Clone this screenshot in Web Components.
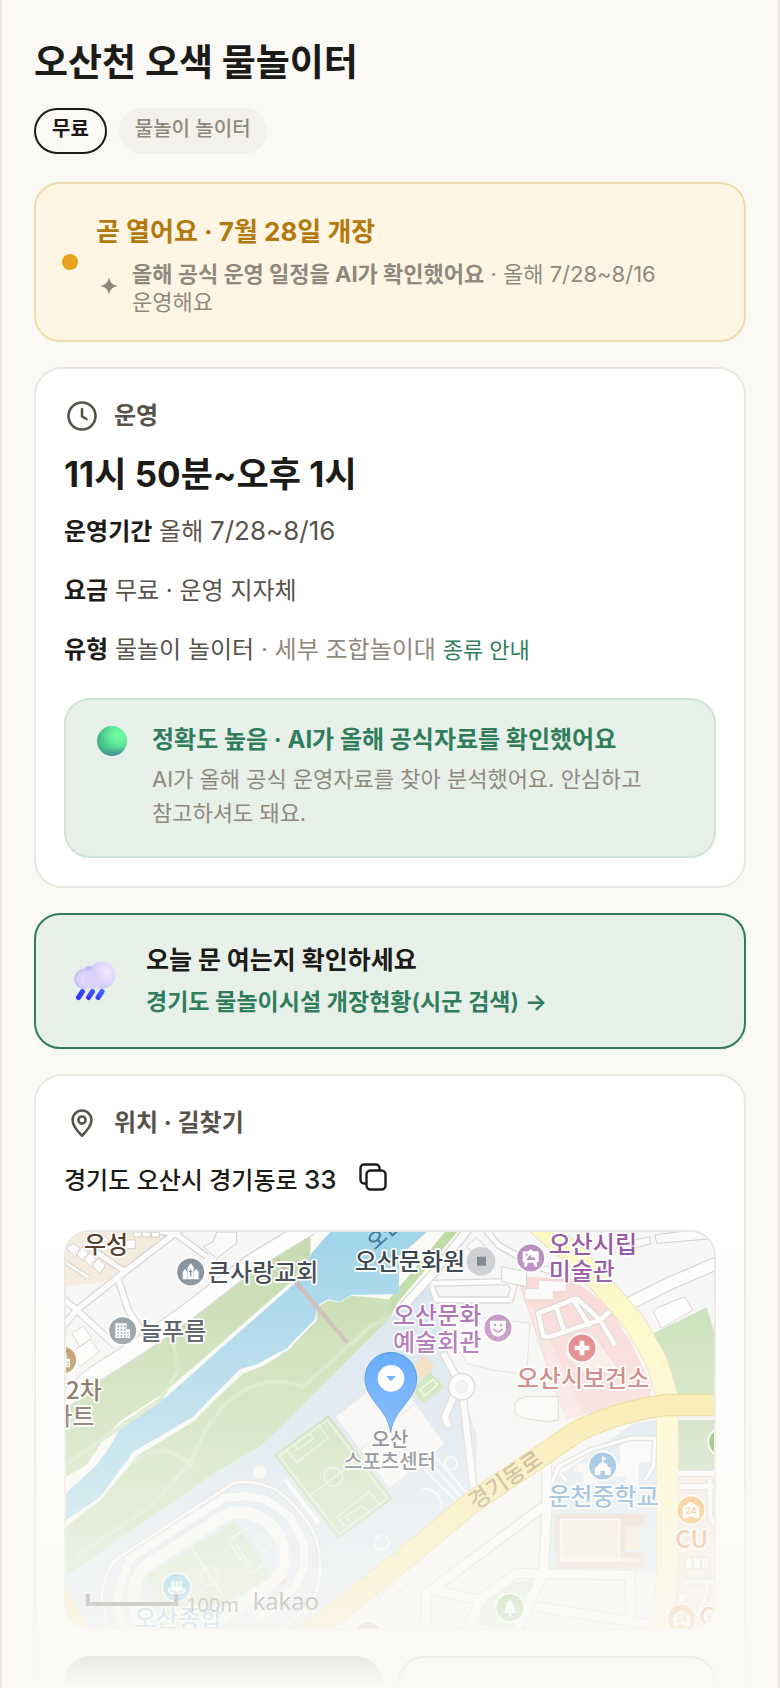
<!DOCTYPE html>
<html lang="ko">
<head>
<meta charset="utf-8">
<meta name="viewport" content="width=device-width, initial-scale=1">
<title>오산천 오색 물놀이터</title>
<style>
  * { box-sizing: border-box; }
  body {
    margin: 0;
    background: #faf9f5;
    color: #1d1b17;
    font-family: Inter, "Noto Sans CJK KR", sans-serif;
    --ink: #1d1b17;
    --sub: #57534a;
    --muted: #8f897d;
    --line: #e9e7e0;
    --green: #2f7d5b;
    --mint: #e8f0ea;
    --mint-line: #cfe3d8;
  }
  .num { font-size: 26px; line-height: 1; }
</style>
</head>
<body>

<place-page>
  <h1 slot="title">오산천 오색 물놀이터</h1>
  <place-chip slot="tags" strong>무료</place-chip>
  <place-chip slot="tags">물놀이 놀이터</place-chip>

  <status-banner>
    <span slot="title">곧 열어요 · 7월 28일 개장</span>
    <b>올해 공식 운영 일정을 AI가 확인했어요</b> · 올해 7/28~8/16 운영해요
  </status-banner>

  <info-card icon="clock" label="운영">
    <hours-info></hours-info>
  </info-card>

  <today-link></today-link>

  <info-card icon="pin" label="위치 · 길찾기">
    <address-row>경기도 오산시 경기동로 <span class="num">33</span></address-row>
    <place-map></place-map>
    <route-actions></route-actions>
  </info-card>
</place-page>

<script>
function makeTemplate(html) {
  const t = document.createElement("template");
  t.innerHTML = html;
  return t;
}

// every element below clones its template into an open shadow root
class BaseElement extends HTMLElement {
  constructor() {
    super();
    this.attachShadow({ mode: "open" });
    this.shadowRoot.appendChild(this.constructor.template.content.cloneNode(true));
  }
}

/* ---------- page ---------- */
class PlacePage extends BaseElement {
  static template = makeTemplate(`
<style>
  * { box-sizing: border-box; }
  :host {
    display: block;
    box-sizing: border-box;
    height: 100vh;
    overflow: hidden;
    padding: 37px 32px 0;
    border: solid var(--line);
    border-width: 0 2px;
    position: relative;
  }
  ::slotted(h1) { margin: 0; font-size: 37px; line-height: 52px; font-weight: 700; }
  .tags { display: flex; gap: 12px; margin: 19px 0 28px; }
  .cards { display: flex; flex-direction: column; gap: 25px; }
  .fade {
    position: absolute;
    left: 0; right: 0; bottom: 0;
    height: 440px;
    background: linear-gradient(rgba(250,249,245,0), #faf9f5);
    pointer-events: none;
  }
</style>
<slot name="title"></slot>
<div class="tags"><slot name="tags"></slot></div>
<main class="cards"><slot></slot></main>
<div class="fade"></div>
`);
}
customElements.define("place-page", PlacePage);

/* ---------- chip ---------- */
class PlaceChip extends BaseElement {
  static template = makeTemplate(`
<style>
  :host {
    display: block;
    padding: 7px 16px 11px;
    border-radius: 23px;
    background: #f2f1ec;
    color: var(--muted);
    font-size: 20px;
    line-height: 28px;
    font-weight: 500;
  }
  :host([strong]) { padding: 5px 16px 9px; border: 2px solid var(--ink); background: none; color: var(--ink); font-weight: 700; }
</style>
<slot></slot>
`);
}
customElements.define("place-chip", PlaceChip);

/* ---------- opening status ---------- */
class StatusBanner extends BaseElement {
  static template = makeTemplate(`
<style>
  :host {
    display: flex;
    align-items: center;
    gap: 18px;
    padding: 28px 26px 24px;
    border: 2px solid #f0dcaa;
    border-radius: 26px;
    background: #fff5e4;
  }
  .dot { width: 16px; height: 16px; border-radius: 50%; background: #e6a219; flex: none; }
  .dot, .spark { margin-bottom: 4px; }
  .title { color: #b27a0d; font-size: 26px; line-height: 40px; font-weight: 700; }
  .note { display: flex; align-items: center; gap: 14px; margin-top: 8px; padding-left: 4px; color: var(--muted); font-size: 22px; line-height: 28px; }
  .spark { width: 18px; height: 18px; flex: none; }
  p { margin: 0; max-width: 530px; word-break: keep-all; }
</style>
<span class="dot"></span>
<div>
  <div class="title"><slot name="title"></slot></div>
  <div class="note">
    <svg class="spark" viewBox="0 0 18 18"><path d="M9 0C9.900 5.400 12.600 8.100 18 9C12.600 9.900 9.900 12.600 9 18C8.100 12.600 5.400 9.900 0 9C5.400 8.100 8.100 5.400 9 0Z" fill="#8f897d"/></svg>
    <p><slot></slot></p>
  </div>
</div>
`);
}
customElements.define("status-banner", StatusBanner);

/* ---------- card with an icon heading ---------- */
const cardIcons = {
  clock: `<circle cx="12" cy="12" r="9"/><path d="M12 7.3v5l3 1.7"/>`,
  pin: `<path d="M12 20.5C8.5 17 5.7 13.6 5.7 10a6.3 6.3 0 0 1 12.6 0c0 3.6-2.8 7-6.3 10.5z"/><circle cx="12" cy="10" r="2.4"/>`
};

class InfoCard extends BaseElement {
  static template = makeTemplate(`
<style>
  :host { display: block; padding: 29px 28px 28px; border: 2px solid var(--line); border-radius: 28px; background: #fff; }
  h2 {
    display: flex;
    align-items: center;
    gap: 14px;
    margin: 0;
    color: var(--sub);
    font-size: 24px;
    line-height: 36px;
    font-weight: 700;
  }
  svg { width: 36px; height: 36px; fill: none; stroke: currentColor; stroke-width: 1.7; stroke-linecap: round; stroke-linejoin: round; }
</style>
<h2><svg viewBox="0 0 24 24"></svg><span></span></h2>
<slot></slot>
`);
  connectedCallback() {
    this.shadowRoot.querySelector("svg").innerHTML = cardIcons[this.getAttribute("icon")];
    this.shadowRoot.querySelector("span").textContent = this.getAttribute("label");
  }
}
customElements.define("info-card", InfoCard);

/* ---------- opening hours ---------- */
class HoursInfo extends BaseElement {
  static template = makeTemplate(`
<style>
  :host { display: block; }
  .time { margin: 18px 0; font-size: 35px; line-height: 44px; font-weight: 700; }
  .row { margin: 0 0 23px; color: var(--sub); font-size: 24px; line-height: 36px; }
  .row b { color: var(--ink); }
  .row .extra { color: var(--muted); }
  .num { font-size: 26px; line-height: 1; }
  a { color: var(--green); font-size: 22px; line-height: 1; text-decoration: none; }
  .trust {
    display: flex;
    gap: 24px;
    margin-top: 30px;
    padding: 22px 30px 26px;
    border: 2px solid var(--mint-line);
    border-radius: 26px;
    background: var(--mint);
  }
  .trust svg { width: 32px; height: 32px; flex: none; margin-top: 4px; }
  h3 { margin: 0 0 4px; color: var(--green); font-size: 24px; line-height: 36px; font-weight: 700; }
  p { margin: 0; }
  .trust p { color: var(--muted); font-size: 22px; line-height: 34px; max-width: 500px; word-break: keep-all; }
</style>
<p class="time">11시 50분~오후 1시</p>
<p class="row"><b>운영기간</b> 올해 <span class="num">7/28~8/16</span></p>
<p class="row"><b>요금</b> 무료 · 운영 지자체</p>
<p class="row"><b>유형</b> 물놀이 놀이터 <span class="extra">· 세부 조합놀이대</span> <a href="#types">종류 안내</a></p>
<div class="trust">
  <svg viewBox="0 0 32 32">
    <defs>
      <radialGradient id="ball" cx=".72" cy=".32" r=".75">
        <stop offset="0" stop-color="#70ffa3"/><stop offset=".35" stop-color="#63ee9a"/><stop offset="1" stop-color="#3fae83"/>
      </radialGradient>
      <linearGradient id="shade" x1=".4" y1="0" x2=".5" y2="1">
        <stop offset=".72" stop-color="#4a8f9a" stop-opacity="0"/><stop offset="1" stop-color="#4d84a6" stop-opacity=".85"/>
      </linearGradient>
    </defs>
    <circle cx="16" cy="15" r="15" fill="url(#ball)"/>
    <circle cx="16" cy="15" r="15" fill="url(#shade)"/>
  </svg>
  <div>
    <h3>정확도 높음 · AI가 올해 공식자료를 확인했어요</h3>
    <p>AI가 올해 공식 운영자료를 찾아 분석했어요. 안심하고 참고하셔도 돼요.</p>
  </div>
</div>
`);
}
customElements.define("hours-info", HoursInfo);

/* ---------- check today ---------- */
class TodayLink extends BaseElement {
  static template = makeTemplate(`
<style>
  :host { display: block; }
  a {
    display: flex;
    align-items: center;
    gap: 28px;
    padding: 27px 34px;
    border: 2px solid var(--green);
    border-radius: 26px;
    background: var(--mint);
    color: var(--green);
    text-decoration: none;
    font-size: 23px;
    line-height: 36px;
    font-weight: 600;
  }
  strong { display: block; margin-bottom: 6px; color: var(--ink); font-size: 25px; font-weight: 700; }
  svg { width: 48px; height: 48px; flex: none; }
</style>
<a href="#today">
  <svg viewBox="0 0 48 48">
    <defs>
      <radialGradient id="c1" cx=".68" cy=".38" r=".72"><stop offset="0" stop-color="#f0e8fd"/><stop offset=".65" stop-color="#dcd2fb"/><stop offset="1" stop-color="#c3b9f6"/></radialGradient>
      <radialGradient id="c2" cx=".55" cy=".5" r=".6"><stop offset="0" stop-color="#e6ddfa"/><stop offset=".6" stop-color="#dbd1fa"/><stop offset="1" stop-color="#bdb3f5"/></radialGradient>
      <linearGradient id="drop" x1="0" y1="1" x2="1" y2="0"><stop offset="0" stop-color="#3b2fff"/><stop offset="1" stop-color="#3c62ff"/></linearGradient>
    </defs>
    <circle cx="19" cy="14" r="5" fill="#bfb6f5"/>
    <circle cx="32" cy="18" r="13.500" fill="url(#c1)"/>
    <path d="M14 14H28V31.500H14Z" fill="#d9d0fb"/>
    <circle cx="14" cy="22" r="10" fill="url(#c2)"/>
    <path d="M14 18L20 14L30 18V31.500H14Z" fill="#dcd3fb"/>
    <g stroke="url(#drop)" stroke-width="5" stroke-linecap="round">
      <path d="M8.500 40.500l4-6M18.500 40.500l4-6M28 40.500l4-6"/>
    </g>
  </svg>
  <span><strong>오늘 문 여는지 확인하세요</strong>경기도 물놀이시설 개장현황(시군 검색) →</span>
</a>
`);
}
customElements.define("today-link", TodayLink);

/* ---------- address with copy button ---------- */
class AddressRow extends BaseElement {
  static template = makeTemplate(`
<style>
  :host { display: flex; align-items: flex-start; gap: 22px; margin: 22px 0 31px; font-size: 24px; line-height: 36px; font-weight: 500; }
  button { padding: 0; border: 0; background: none; width: 28px; height: 28px; color: var(--ink); }
  svg { display: block; width: 28px; height: 28px; fill: none; stroke: currentColor; stroke-width: 2.400; stroke-linejoin: round; }
</style>
<span><slot></slot></span>
<button type="button" aria-label="주소 복사">
  <svg viewBox="0 0 28 28"><rect x="7.500" y="7.500" width="19" height="19" rx="4"/><path d="M7.500 20.500H5a3.500 3.500 0 0 1-3.500-3.500V5A3.500 3.500 0 0 1 5 1.500h12A3.500 3.500 0 0 1 20.500 5v2.500"/></svg>
</button>
`);
}
customElements.define("address-row", AddressRow);

/* ---------- map ---------- */
// [path, width] - narrow streets, white with a grey casing
const streets = [
  ["M780 20L600 130L420 270L280 370L130 465L20 560", 46],
  ["M30 330L80 270L225 155L440 -10", 16],
  ["M20 220L80 270L200 380", 16],
  ["M205 180L235 270L300 375", 16],
  ["M100 70L225 155M230 20L375 40L470 110", 14],
  ["M1260 20L1145 165L1060 260", 22],
  ["M1145 200L1160 240L1380 240L1392 200L1375 185L1145 190", 14],
  ["M1300 20L1345 75L1450 135L1560 175", 14],
  ["M1180 400L1235 500M1235 500L1250 630L1270 800M1215 520L1185 590L1195 620", 18],
  ["M1740 250L1860 190L2000 130", 34],
  ["M1480 350L1465 280L1580 235L1650 300L1500 350ZM1520 265L1545 340M1570 240L1620 320M1650 300L1695 375M1650 300L1690 265", 13],
  ["M1505 790L1525 740L1620 690L1740 655L1815 655L1810 740L1785 780", 9],
  ["M1530 760L1550 785", 9],
  ["M1490 700L1490 880L1480 1060L1400 1230", 26],
  ["M1480 860L1130 1120L1125 1240", 26],
  ["M1150 1110L1290 1140L1400 1060L1740 1065L1745 1240", 26],
  ["M1290 1140L1250 1240M1460 1160L1810 1215", 26],
  ["M1880 760L2000 760M1890 800L2000 800M1980 780L1980 890L2000 920", 14],
  ["M1905 1085L2000 1085M1970 1085L1970 1120L1940 1190", 12]
];

function road(list, color, extra) {
  return list.map(([d, w]) => `<path d="${d}" stroke="${color}" stroke-width="${w + extra}"/>`).join("");
}

function label(x, y, text, color, size = 72, anchor = "start", more = "") {
  return `<text x="${x}" y="${y}" fill="${color}" font-size="${size}" text-anchor="${anchor}" ${more}>${text}</text>`;
}

function poi(x, y, color, glyph) {
  return `<g transform="translate(${x} ${y})"><circle r="43" fill="${color}" stroke="#fff" stroke-width="5"/>${glyph}</g>`;
}

const store24 = `<path d="M-25 -8L0 -25L25 -8V24H8V20H-8V24H-25Z" fill="#fff"/><text y="11" font-size="26" font-weight="700" fill="#f9a63c" text-anchor="middle" font-family="Inter, sans-serif">24</text>`;
const building = `<path d="M-22 -22H12V-4H22V22H-22Z" fill="#fff"/><path d="M-16 -13H10M-16 -3H10M-16 7H18M-16 16H18" stroke="#8a969c" stroke-width="5" stroke-dasharray="5 5" fill="none"/>`;

class PlaceMap extends BaseElement {
  static template = makeTemplate(`
<style>
  :host { display: block; height: 400px; box-sizing: border-box; border: 2px solid var(--line); border-radius: 26px; overflow: hidden; }
  svg { display: block; width: 100%; height: 100%; }
  .roads path { fill: none; stroke-linejoin: round; }
  .thin { fill: none; stroke-linejoin: round; }
  .labels text { font-family: "Noto Sans CJK KR", sans-serif; font-weight: 500; paint-order: stroke; stroke: #fff; stroke-width: 10px; stroke-linejoin: round; }
</style>
<svg viewBox="48 36 1944 1188" preserveAspectRatio="xMidYMid slice" role="img" aria-label="지도">
  <rect x="0" y="0" width="2100" height="1300" fill="#f6f6f6"/>
  <!-- apartment blocks -->
  <path d="M48 36H360L225 140L165 185L48 200Z" fill="#f5ebdd"/>
  <path d="M1870 770H2000V1240H1860Z" fill="#f3e6dc"/>

  <!-- river banks and park -->
  <path d="M720 36H1240L1020 295L700 615L630 680L500 755L48 1070V540Z" fill="#fafaf7"/>
  <path d="M724 36H781V110L730 180L480 398L340 520L215 600L165 650L110 735L48 770V545L155 468L420 262L640 115Z" fill="#c6dcb0"/>
  <path d="M1047 240L1020 295L700 615L630 680L500 755L48 1070V920L150 842L265 705L430 605L500 535L580 460L640 437L715 390L800 300V262L835 242L870 247L905 227Z" fill="#c6dcb0"/>
  <path d="M1185 36H1222L1020 275V235Z" fill="#c0dba6"/>
  <path d="M840 36H1130L1047 110V222L905 225L870 245L835 238L800 258L795 298L710 385L620 433L570 448L490 528L430 590L250 695L150 832L48 900V820L140 735L180 680L220 605L350 530L490 405L740 185L785 100Z" fill="#a3d5ea"/>
  <path d="M48 735L110 690L330 540L385 450L370 370M80 1010L300 860L420 730L480 600M430 740Q330 650 250 730M470 630Q580 440 760 500L960 320L1020 290" class="thin" stroke="#d3e4c1" stroke-width="12"/>
  <path d="M680 118L892 368" stroke="#c9b8b2" stroke-width="13"/>

  <!-- sports complex -->
  <path d="M48 1070L500 755L630 680L700 615L1020 295L1140 190L1200 420L1250 560L1280 640V800L780 1240H120L48 1100Z" fill="#d6e4f0"/>
  <path d="M1170 300L1250 290L1360 300L1440 310L1430 460H1400L1330 450L1250 430L1235 400L1190 380Z" fill="#f8f8f8" stroke="#ddd" stroke-width="3"/>
  <path d="M1120 404L1155 435L1120 485L1085 450Z" fill="#f0dab8"/>
  <path d="M1140 455L1185 500L1120 552L1085 510Z" fill="#c5e0ae"/>
  <path d="M1110 508L1150 478L1162 495L1122 528Z" class="thin" stroke="#f2f7ec" stroke-width="4"/>
  <path d="M855 590L1050 440L1090 540L1185 672L1018 806Z" fill="#f7f7f7" stroke="#ddd" stroke-width="3"/>
  <path d="M930 690L1090 555" stroke="#ddd" stroke-width="3"/>
  <circle cx="1202" cy="730" r="19" class="thin" stroke="#f6f9fb" stroke-width="6"/>
  <circle cx="995" cy="967" r="22" class="thin" stroke="#f6f9fb" stroke-width="6"/>
  <path d="M1140 725L1240 840M1160 715L1255 825M1120 745L1225 850M1115 805Q1180 810 1175 870" class="thin" stroke="#f4f7f9" stroke-width="7"/>

  <path d="M675 705L835 588L1025 835L865 955Z" fill="#c6dcb0" stroke="#bcd2a4" stroke-width="4"/>
  <g class="thin" stroke="#e3eed8" stroke-width="5">
    <path d="M687 708L832 600L1013 834L868 942ZM775 830L925 718M710 692L740 727L835 655L808 618M733 675L745 688L790 655L778 638M862 890L958 815L992 858M885 920L862 890M905 905L885 890L935 858L960 878"/>
    <circle cx="850" cy="771" r="28"/>
  </g>
  <path d="M697 780L710 772L812 905L800 914Z" fill="#fafafa" stroke="#ddd" stroke-width="3"/>
  <circle cx="628" cy="757" r="21" fill="#fafafa" stroke="#ddd" stroke-width="3"/>

  <g class="thin">
    <path d="M175 1240L155 1130Q165 1040 210 1010L550 790Q600 775 680 810Q770 880 800 960Q825 1060 790 1140L690 1240" stroke="#d7cfd0" stroke-width="14"/>
    <path d="M175 1240L155 1130Q165 1040 210 1010L550 790Q600 775 680 810Q770 880 800 960Q825 1060 790 1140L690 1240" stroke="#f9fafb" stroke-width="8"/>
    <path d="M220 1240L200 1130L240 1015L520 835L590 828L650 840L720 890L762 970V1040L735 1100L620 1205" stroke="#dddddf" stroke-width="30"/>
    <path d="M220 1240L200 1130L240 1015L520 835L590 828L650 840L720 890L762 970V1040L735 1100L620 1205" stroke="#f9fafb" stroke-width="24"/>
    <path d="M270 1240L252 1120Q255 1060 300 1030L520 890Q590 860 650 905Q715 960 700 1040Q690 1075 650 1100L450 1240" stroke="#f9f9f9" stroke-width="36"/>
  </g>
  <path d="M290 1065L555 905L665 1070L400 1224H340Z" fill="#cadfb6"/>
  <path d="M425 985L520 1130M535 960L590 925M535 960L600 1060L640 1035M560 975L600 1040M612 955L638 940L664 978L637 995Z" class="thin" stroke="#eaf3e0" stroke-width="5"/>
  <circle cx="477" cy="1070" r="27" class="thin" stroke="#eaf3e0" stroke-width="5"/>
  <path d="M680 1100L705 1075L715 1085Z" fill="#d8b8b0"/>
  <path d="M48 1100L115 1224H48Z" fill="#fbe08a"/>

  <!-- health centre block -->
  <path d="M1400 170L1565 175L1675 260L1750 380L1805 500L1800 530L1680 560L1550 600L1510 500Z" fill="#f9d8d5"/>
  <path d="M1405 170L1550 600L1600 580L1470 300L1430 240Z" fill="#fae3df"/>
  <path d="M1465 180L1550 185V215H1510V240H1425V205H1465Z" fill="#fafafa" stroke="#e5d5d2" stroke-width="3"/>
  <path d="M1540 400L1630 340L1700 440L1620 480Z" fill="#f8ebe7" stroke="#e5d0cc" stroke-width="3"/>

  <!-- east parks -->
  <path d="M1810 340L1970 262L2000 360V540H1890Z" fill="#c5dfb5"/>
  <path d="M1885 600H2000V750H1885Z" fill="#c3dab2"/>
  <path d="M1290 1140L1390 1090L1455 1075L1425 1240L1280 1210Z" fill="#cfe3bd"/>

  <!-- school -->
  <path d="M1480 800L1640 690L1750 610L1820 600V1060H1490Z" fill="#d9e6f0"/>
  <path d="M1710 675L1745 662H1805V728H1765V800H1730V770H1640V790H1600V760L1570 752L1585 730H1710Z" fill="#fafafa"/>
  <path d="M1525 890H1775V910H1720V1005H1775V1035H1525Z" fill="#f2e8d2" stroke="#e3cdc4" stroke-width="18"/>
  <path d="M1533 898H1708V1020H1533Z" class="thin" stroke="#fff" stroke-width="4"/>
  <path d="M1728 920H1770V990H1728Z" fill="#f3e6c8"/>

  <g class="roads">${road(streets, "#d6d6d6", 8)}${road(streets, "#fdfdfd", 0)}</g>
  <circle cx="1235" cy="500" r="30" fill="#f2f2f2" stroke="#d3d3d3" stroke-width="24"/>
  <circle cx="1235" cy="500" r="28" class="thin" stroke="#fdfdfd" stroke-width="18"/>

  <!-- small buildings -->
  <g fill="#fff" stroke="#d4d0ca" stroke-width="3">
    <path d="M50 85l20 -15l22 18l-16 22zM74 98l22 -16l20 20l-16 22zM98 116l22 -16l20 20l-16 22zM122 132l22 -16l22 20l-16 26z"/>
    <path d="M230 60h26v26h-26zM250 36h24v15h-24zM277 36h24v15h-24zM304 36h24v15h-24z"/>
    <path d="M65 340L100 318L125 355L90 380ZM60 400L120 358L148 395L90 440Z"/>
    <path d="M460 80L490 65L500 36H560V70L500 115Z" fill="#fafafa"/>
    <path d="M1810 275L1825 262L1905 230L1928 270L1835 325Z"/>
    <path d="M1815 45L2000 20V55L1820 70ZM1700 75L1798 50L1802 72L1710 95Z" fill="#fafafa"/>
    <path d="M1355 140L1430 155V200L1355 185ZM1250 80L1280 52L1315 90L1290 115Z" fill="#fafafa"/>
    <path d="M1395 545L1425 530L1525 530V600L1490 605L1420 595L1395 580Z" fill="#fafafa"/>
    <path d="M1905 1013h22v32h-22zM1930 1013h22v32h-22zM1955 1013h22v32h-22zM1885 1118h22v30h-22z"/>
    <path d="M985 1130L1055 1075L1070 1095L1000 1150Z" fill="#fafafa"/>
  </g>
  <path d="M50 130L115 172M120 25L205 85" stroke="#d4d0ca" stroke-width="14"/>
  <path d="M50 130L115 172M120 25L205 85" stroke="#fff" stroke-width="8"/>

  <!-- main roads -->
  <g class="roads">
    <path d="M1450 0L1500 45L1580 110L1660 200L1755 310L1820 425L1852 530V1060L1835 1240" stroke="#e2ddbd" stroke-width="67"/>
    <path d="M1450 0L1500 45L1580 110L1660 200L1755 310L1820 425L1852 530V1060L1835 1240" stroke="#fff8c4" stroke-width="62"/>
    <path d="M740 1270L1050 1027L1260 852L1470 710L1580 635Q1700 575 1850 555H2010" stroke="#e3cd6e" stroke-width="67"/>
    <path d="M740 1270L1050 1027L1260 852L1470 710L1580 635Q1700 575 1850 555H2010" stroke="#fde796" stroke-width="61"/>
  </g>

  ${poi(422, 156, "#84919a", `<path d="M-24 22V0l8 -10l6 10V22ZM24 22V0l-8 -10l-6 10V22ZM-9 22V-14L0 -26L9 -14V22Z" fill="#fff"/><path d="M0 -8V14M-5 -1H5" stroke="#84919a" stroke-width="4"/>`)}
  ${poi(218, 332, "#8a969c", building)}
  ${poi(38, 420, "#b88a52", building)}
  <circle cx="1293" cy="124" r="43" fill="#cfd0d3"/><path d="M1281 110h27v27h-27z" fill="#7e8a90"/>
  ${poi(1442, 114, "#bb8fc2", `<path d="M-24 -20H-8L0 -26L8 -20H24V12H18L20 26H12L8 14H-8L-12 26H-20L-18 12H-24Z" fill="#fff"/><path d="M-14 6L-2 -10L4 0L9 -5L15 6Z" fill="#bb8fc2"/><circle cx="-12" cy="-10" r="3" fill="#bb8fc2"/>`)}
  ${poi(1344, 324, "#be8cc0", `<path d="M-24 -22H24V0Q20 24 0 26Q-20 24 -24 0Z" fill="#fff"/><path d="M-13 2Q0 22 13 2" fill="none" stroke="#be8cc0" stroke-width="5"/><circle cx="-9" cy="-9" r="4" fill="#be8cc0"/><circle cx="9" cy="-9" r="4" fill="#be8cc0"/>`)}
  ${poi(1596, 384, "#dd7377", `<path d="M-7 -22H7V-7H22V7H7V22H-7V7H-22V-7H-7Z" fill="#fff"/>`)}
  ${poi(1658, 738, "#65a0d8", `<path d="M-24 27V6L-14 0V-4L0 -14L14 -4V0L24 6V27H7V14H-7V27Z" fill="#fff"/><path d="M0 -12V-28L9 -22L1 -18" fill="#fff" stroke="#fff" stroke-width="3"/>`)}
  ${poi(1923, 870, "#f9a63c", store24)}
  ${poi(1895, 1195, "#f59a4a", store24)}
  ${poi(1380, 1163, "#78b35c", `<path d="M0 -26L13 -8H8L18 6H12L22 16H4V26H-4V16H-22L-12 6H-18L-8 -8H-13Z" fill="#fff"/>`)}
  ${poi(2018, 666, "#62ac45", "")}
  ${poi(954, 1248, "#b98f6c", "")}
  ${poi(380, 1102, "#46b0e2", `<path d="M-26 4Q0 -12 26 4V14Q0 32 -26 14Z" fill="#fff"/><path d="M-12 -2V-18M0 -2V-18M12 -2V-18" stroke="#fff" stroke-width="7"/><path d="M-22 8Q0 22 22 8" fill="none" stroke="#46b0e2" stroke-width="3"/>`)}

  <g class="labels">
    ${label(102, 100, "우성", "#58412e")}
    ${label(474, 184, "큰사랑교회", "#3b454c")}
    ${label(270, 360, "늘푸름", "#3d474e")}
    ${label(48, 538, "2차", "#5b4534")}
    ${label(133, 616, "파트", "#5b4534", 72, "end")}
    ${label(975, 92, "오산천", "#3f7c9a", 60, "start", `transform="rotate(-42 975 92)" style="stroke:none"`)}
    ${label(914, 150, "오산문화원", "#36424a")}
    ${label(1496, 100, "오산시립", "#9858a4")}
    ${label(1496, 180, "미술관", "#9858a4")}
    ${label(1294, 312, "오산문화", "#a360ad", 72, "end")}
    ${label(1294, 392, "예술회관", "#a360ad", 72, "end")}
    ${label(1599, 500, "오산시보건소", "#bd6261", 72, "middle")}
    ${label(1020, 682, "오산", "#434b55", 60, "middle")}
    ${label(1020, 746, "스포츠센터", "#434b55", 60, "middle")}
    ${label(1380, 800, "경기동로", "#a88c55", 68, "middle", `transform="rotate(-35 1380 800)" style="stroke:none"`)}
    ${label(1660, 856, "운천중학교", "#3f87cc", 72, "middle")}
    ${label(1876, 985, "CU", "#e58440")}
    ${label(1948, 1215, "G", "#e07838")}
    ${label(252, 1220, "오산종합", "#4aa5dc")}
  </g>
  <path d="M113 1122V1152H379V1122" fill="none" stroke="#222" stroke-width="12"/>
  <text x="408" y="1175" font-size="60" fill="#222" font-family="Open Sans, sans-serif">100m</text>
  <text x="608" y="1170" font-size="72" fill="#111" font-family="Open Sans, sans-serif">kakao</text>

  <path d="M1022 638C1016 590 990 570 963 530C952 512 945 495 945 475A77.500 77.500 0 0 1 1100 475C1100 495 1093 512 1082 530C1055 570 1028 590 1022 638Z" fill="#3a95ff" stroke="#2374d8" stroke-width="3"/>
  <circle cx="1023" cy="475" r="40" fill="#fff"/>
  <path d="M1008 468H1038L1023 484Z" fill="#3a95ff"/>
</svg>
`);
}
customElements.define("place-map", PlaceMap);

/* ---------- route buttons ---------- */
class RouteActions extends BaseElement {
  static template = makeTemplate(`
<style>
  :host { display: grid; grid-template-columns: 1fr 1fr; gap: 16px; margin-top: 26px; }
  button { height: 88px; border: 2px solid var(--ink); border-radius: 26px; background: var(--ink); }
  button + button { border-color: var(--green); background: #fff; }
</style>
<button type="button" aria-label="길찾기"></button>
<button type="button" aria-label="지도 보기"></button>
`);
}
customElements.define("route-actions", RouteActions);
</script>
</body>
</html>
